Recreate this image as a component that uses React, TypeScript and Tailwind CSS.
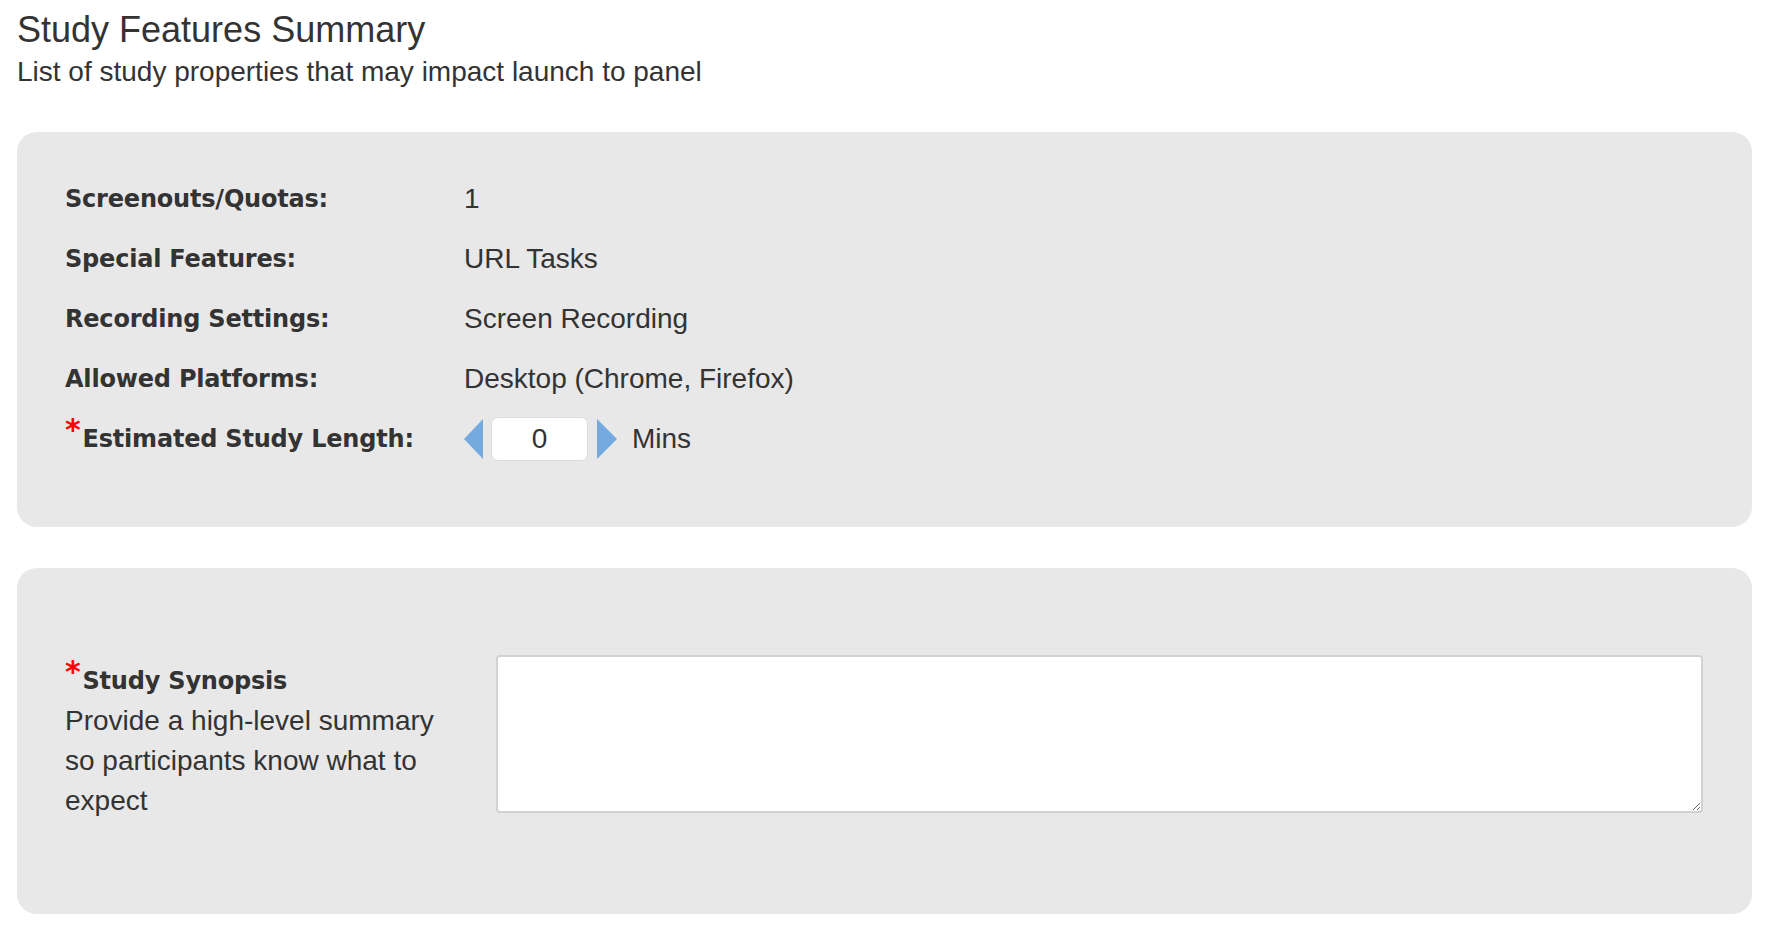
import { useState } from "react";

const SANS = "font-['Liberation_Sans',Arial,sans-serif]";
const LABEL = "font-['DejaVu_Sans',Verdana,sans-serif] font-bold text-[24px] tracking-[-0.2px] text-[#333]";

const ROWS: { label: string; value: string }[] = [
  { label: "Screenouts/Quotas:", value: "1" },
  { label: "Special Features:", value: "URL Tasks" },
  { label: "Recording Settings:", value: "Screen Recording" },
  { label: "Allowed Platforms:", value: "Desktop (Chrome, Firefox)" },
];

function Required() {
  return (
    <span className="relative -top-[7px] mr-[2px] text-[30px] leading-none text-[#ff0000]">
      *
    </span>
  );
}

function LengthSpinner() {
  const [mins, setMins] = useState(0);

  return (
    <div className="flex items-center">
      <button
        type="button"
        aria-label="Decrease"
        onClick={() => setMins((m) => Math.max(0, m - 1))}
        className="flex h-[40px] w-[20px] items-center"
      >
        <svg width="20" height="40" viewBox="0 0 20 40" aria-hidden="true">
          <path d="M19 0L0 20l19 20z" fill="#75aade" />
        </svg>
      </button>
      <input
        value={mins}
        onChange={(e) => setMins(Number(e.target.value) || 0)}
        className={`${SANS} ml-[7px] h-[44px] w-[97px] rounded-[7px] border border-[#dcdcdc] bg-white text-center text-[28px] text-[#333] outline-none`}
      />
      <button
        type="button"
        aria-label="Increase"
        onClick={() => setMins((m) => m + 1)}
        className="ml-[9px] flex h-[40px] w-[20px] items-center"
      >
        <svg width="20" height="40" viewBox="0 0 20 40" aria-hidden="true">
          <path d="M0 0l20 20L0 40z" fill="#75aade" />
        </svg>
      </button>
      <span className="ml-[15px] text-[28px] text-[#333]">Mins</span>
    </div>
  );
}

export default function App() {
  return (
    <div className={`${SANS} min-h-screen bg-white pl-[17px] pr-[26px] pt-[10px] text-[#333]`}>
      <h1 className="text-[36px] leading-[40px] font-normal">Study Features Summary</h1>
      <p className="mt-[6px] text-[28px] leading-[32px]">
        List of study properties that may impact launch to panel
      </p>

      <section className="mt-[44px] h-[395px] rounded-[20px] bg-[#e8e8e8] pl-[48px] pt-[37px]">
        {ROWS.map((row) => (
          <div key={row.label} className="grid h-[60px] grid-cols-[399px_1fr] items-center">
            <span className={LABEL}>{row.label}</span>
            <span className="text-[28px]">{row.value}</span>
          </div>
        ))}
        <div className="grid h-[60px] grid-cols-[399px_1fr] items-center">
          <span className={LABEL}>
            <Required />
            Estimated Study Length:
          </span>
          <LengthSpinner />
        </div>
      </section>

      <section className="mt-[41px] flex h-[346px] items-start rounded-[20px] bg-[#e8e8e8] pl-[48px] pr-[49px] pt-[87px]">
        <div className="mt-[6px] w-[431px] shrink-0">
          <div className={`${LABEL} leading-[40px]`}>
            <Required />
            Study Synopsis
          </div>
          <p className="w-[385px] text-[28px] leading-[40px]">
            Provide a high-level summary so participants know what to expect
          </p>
        </div>
        <textarea className="h-[158px] flex-1 rounded-[4px] border-2 border-[#d2d2d2] bg-white p-2 text-[28px] outline-none" />
      </section>
    </div>
  );
}
